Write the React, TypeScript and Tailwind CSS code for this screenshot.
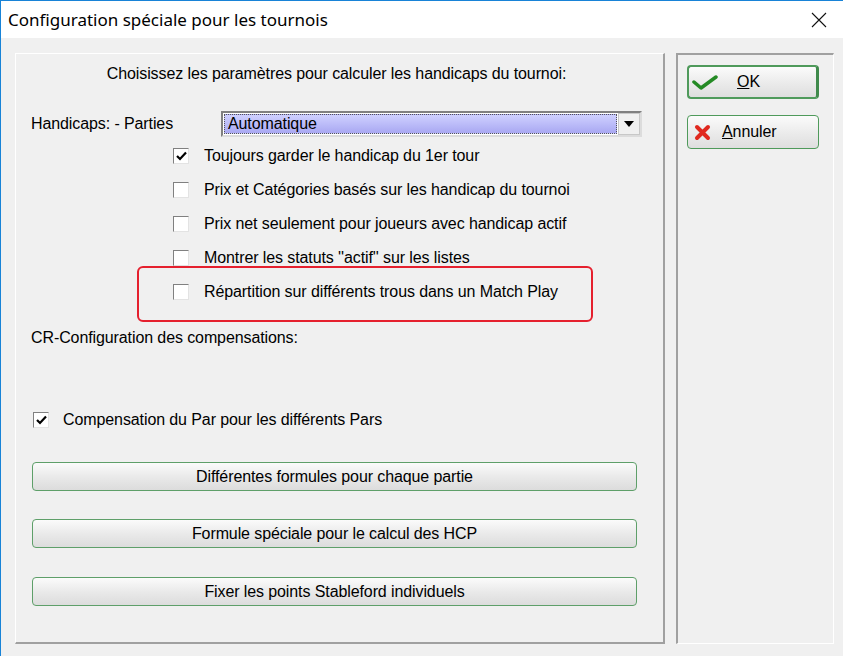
import type { ReactNode } from 'react';

const FONT = { fontFamily: '"Liberation Sans", Arial, sans-serif' };

function CheckBox({ checked }: { checked?: boolean }) {
  return (
    <div className="w-[16px] h-[16px] shrink-0 border border-t-[#808080] border-l-[#808080] border-r-[#e3e3e3] border-b-[#e3e3e3] bg-white flex items-center justify-center">
      {checked && (
        <svg width="11" height="10" viewBox="0 0 11 10">
          <path d="M1 5 L4 8 L10 1.5" stroke="#000" strokeWidth="2.2" fill="none" />
        </svg>
      )}
    </div>
  );
}

function CheckRow({ label, checked }: { label: string; checked?: boolean }) {
  return (
    <div className="h-[34px] flex items-center pl-[157px] gap-[15px]">
      <CheckBox checked={checked} />
      <span>{label}</span>
    </div>
  );
}

function GreenButton({ children, className = '' }: { children: ReactNode; className?: string }) {
  return (
    <div
      className={`w-[605px] h-[29px] ml-[16px] rounded-[4px] border border-[#5e9f69] bg-gradient-to-b from-[#fbfbfb] via-[#eaeaea] to-[#dcdcdc] flex items-center justify-center text-black ${className}`}
    >
      {children}
    </div>
  );
}

export default function App() {
  return (
    <div className="w-[843px] h-[656px] bg-[#f0f0f0] border-l border-t border-[#1883d7] flex flex-col overflow-hidden text-[16px] tracking-[-0.1px] text-black" style={FONT}>
      {/* title bar */}
      <div className="h-[37px] bg-white flex items-center justify-between pl-[7px] pr-[16px] shrink-0 tracking-normal">
        <span className="text-[17px] text-black" style={{ fontFamily: '"Noto Sans", "Open Sans", sans-serif' }}>
          Configuration spéciale pour les tournois
        </span>
        <svg width="16" height="16" viewBox="0 0 16 16">
          <path d="M1 1 L15 15 M15 1 L1 15" stroke="#111" strokeWidth="1.1" />
        </svg>
      </div>

      <div className="flex pt-[15px] pl-[14px] gap-[11px]">
        {/* left panel */}
        <div className="relative w-[650px] h-[591px] border-t border-l border-white border-r-2 border-b-2 border-r-[#a0a0a0] border-b-[#a0a0a0] flex flex-col">
          <div className="mt-[10px] h-[20px] flex items-center justify-center pr-[6px]">
            Choisissez les paramètres pour calculer les handicaps du tournoi:
          </div>

          <div className="mt-[27px] h-[26px] flex items-center">
            <span className="ml-[15px] w-[190px]">Handicaps: - Parties</span>
            <div className="w-[421px] h-[26px] border-2 border-t-[#808080] border-l-[#808080] border-r-[#dcdcdc] border-b-[#dcdcdc] flex bg-white">
              <div className="flex-1 m-[1px] border border-dotted border-[#555] bg-gradient-to-b from-[#cfd0ff] to-[#a9a8f2] flex items-center pl-[3px] leading-none">
                Automatique
              </div>
              <div className="w-[22px] bg-[#f0f0f0] border border-[#c8c8c8] flex items-center justify-center">
                <svg width="10" height="6" viewBox="0 0 10 6">
                  <path d="M0 0 H10 L5 6 Z" fill="#000" />
                </svg>
              </div>
            </div>
          </div>

          <div className="mt-[2px] flex flex-col">
            <CheckRow label="Toujours garder le handicap du 1er tour" checked />
            <CheckRow label="Prix et Catégories basés sur les handicap du tournoi" />
            <CheckRow label="Prix net seulement pour joueurs avec handicap actif" />
            <CheckRow label={'Montrer les statuts \'\'actif\'\' sur les listes'} />
            <CheckRow label="Répartition sur différents trous dans un Match Play" />
          </div>

          {/* highlight annotation */}
          <div className="absolute left-[121px] top-[212px] w-[456px] h-[56px] rounded-[6px] border-2 border-[#e5202e]" />

          <div className="mt-[19px] h-[20px] flex items-center ml-[15px]">CR-Configuration des compensations:</div>

          <div className="mt-[62px] h-[20px] flex items-center ml-[17px] gap-[14px]">
            <CheckBox checked />
            <span>Compensation du Par pour les différents Pars</span>
          </div>

          <GreenButton className="mt-[32px]">Différentes formules pour chaque partie</GreenButton>
          <GreenButton className="mt-[28px]">Formule spéciale pour le calcul des HCP</GreenButton>
          <GreenButton className="mt-[29px]">Fixer les points Stableford individuels</GreenButton>
        </div>

        {/* right panel */}
        <div className="w-[158px] h-[591px] border-t-2 border-l-2 border-t-[#a0a0a0] border-l-[#a0a0a0] border-r border-b border-white flex flex-col items-start pl-[9px] pt-[10px]">
          <div className="w-[132px] h-[34px] rounded-[4px] border-2 border-[#4f9a5b] border-r-[3px] border-r-[#3f8a4b] bg-gradient-to-b from-[#fbfbfb] via-[#ececec] to-[#dedede] flex items-center px-[3px]">
            <svg width="26" height="18" viewBox="0 0 26 18">
              <path d="M2 9 L9 15 L24 4" stroke="#248a24" strokeWidth="3.5" fill="none" strokeLinecap="round" strokeLinejoin="round" />
            </svg>
            <span className="flex-1 text-center pr-[34px]"><span className="underline">O</span>K</span>
          </div>
          <div className="mt-[16px] w-[132px] h-[34px] rounded-[4px] border border-[#4f9a5b] bg-gradient-to-b from-[#fbfbfb] via-[#ececec] to-[#dedede] flex items-center px-[6px] gap-[11px]">
            <svg width="17" height="17" viewBox="0 0 17 17">
              <path d="M3 3 L14 14 M14 3 L3 14" stroke="#e0281e" strokeWidth="4" strokeLinecap="round" />
            </svg>
            <span><span className="underline">A</span>nnuler</span>
          </div>
        </div>
      </div>
    </div>
  );
}
